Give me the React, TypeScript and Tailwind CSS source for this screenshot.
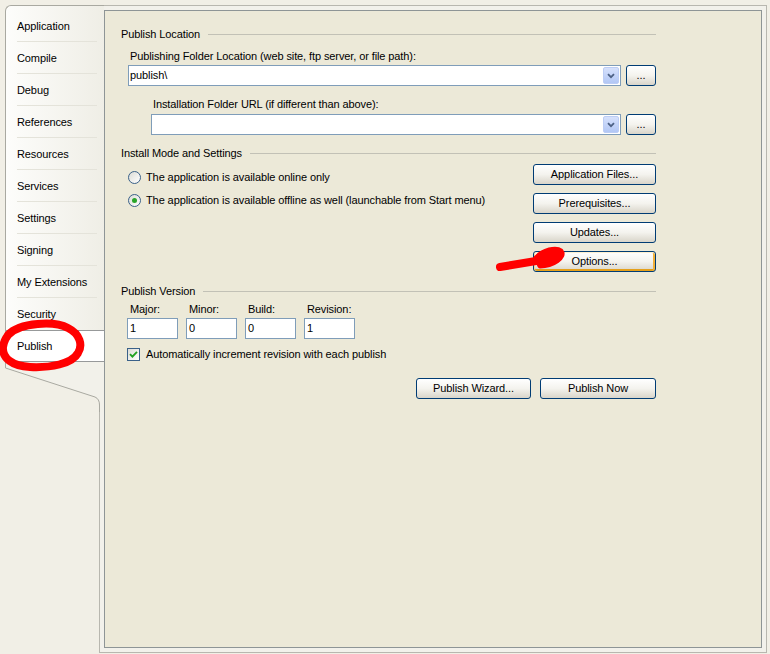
import React from 'react';

const tabs = [
    'Application',
    'Compile',
    'Debug',
    'References',
    'Resources',
    'Services',
    'Settings',
    'Signing',
    'My Extensions',
    'Security',
    'Publish',
];
const selectedTab = 'Publish';

const btn =
    'flex items-center justify-center h-[21px] rounded-[3px] border border-[#003c74] bg-linear-to-b from-[#ffffff] via-[#f4f3ee] to-[#d9d5ca] text-[11px] leading-[13px] text-black';

function Chevron() {
    return (
        <svg width="8" height="6" viewBox="0 0 8 6">
            <path d="M1 1.2 L4 4.2 L7 1.2" fill="none" stroke="#4d6185" strokeWidth="1.8" />
        </svg>
    );
}

function Combo({ value }: { value?: string }) {
    return (
        <div className="flex-1 h-[21px] border border-[#7f9db9] bg-white flex items-center pl-[1px] pr-px">
            <span className="flex-1 text-[11px] leading-[13px]">{value}</span>
            <div className="w-[16px] h-[17px] rounded-[2px] border border-[#bccdf5] bg-linear-to-b from-[#d6e1fc] to-[#b2c7f5] flex items-center justify-center">
                <Chevron />
            </div>
        </div>
    );
}

function GroupHeader({ title }: { title: string }) {
    return (
        <div className="flex items-center gap-[8px] h-[13px]">
            <span className="text-[11px] leading-[13px] whitespace-nowrap">{title}</span>
            <div className="flex-1 h-px bg-[#c2c1b6]" />
        </div>
    );
}

function Radio({ checked, label }: { checked?: boolean; label: string }) {
    return (
        <div className="flex items-center gap-[5px] h-[13px]">
            <div className="w-[13px] h-[13px] rounded-full border border-[#3a6189] bg-linear-to-br from-[#dcdcd6] to-[#ffffff] flex items-center justify-center">
                {checked && <div className="w-[5px] h-[5px] rounded-full bg-[#2aa52a]" />}
            </div>
            <span className="text-[11px] leading-[13px] whitespace-nowrap">{label}</span>
        </div>
    );
}

function VersionField({ label, value }: { label: string; value: string }) {
    return (
        <div className="flex flex-col w-[51px]">
            <span className="text-[11px] leading-[13px] pl-[3px]">{label}</span>
            <div className="mt-[2px] h-[21px] border border-[#7f9db9] bg-white flex items-center pl-[2px] text-[11px] leading-[13px]">
                {value}
            </div>
        </div>
    );
}

function TabColumn() {
    return (
        <div className="relative z-10 self-start w-[99px] -mr-[5px] flex flex-col">
            <div className="border-t border-l border-[#a9a9a1] rounded-tl-[6px] bg-linear-to-r from-[#fdfdfb] to-[#efeee6] pt-[4px]">
                {tabs.map((t, i) => {
                    const selected = t === selectedTab;
                    const nextSelected = tabs[i + 1] === selectedTab;
                    if (selected) {
                        return (
                            <div
                                key={t}
                                className="h-[32px] bg-white border-y border-[#97999a] flex items-center pl-[11px] pt-px text-[11px] leading-[13px]"
                            >
                                {t}
                            </div>
                        );
                    }
                    return (
                        <div key={t} className="h-[32px] flex flex-col">
                            <div className="flex-1 flex items-center pl-[11px] pt-[2px] text-[11px] leading-[13px]">{t}</div>
                            <div
                                className={
                                    nextSelected
                                        ? 'h-px ml-[11px] mr-[7px] bg-transparent'
                                        : 'h-px ml-[11px] mr-[7px] bg-[#e4e3da]'
                                }
                            />
                        </div>
                    );
                })}
            </div>
            <svg width="99" height="50" viewBox="0 0 99 50" className="block">
                <path d="M0 0 L99 0 L99 50 L94.5 50 L94.5 43 Q94.5 37 90 35 L0 6 Z" fill="#f2f1ea" />
                <path d="M0 6 L90 35 Q94.5 37 94.5 43 L94.5 50 L0 50 Z" fill="#f1efe6" />
                <path
                    d="M0.5 0 L0.5 6 L90 35 Q94.5 37 94.5 43 L94.5 50"
                    fill="none"
                    stroke="#a9a9a1"
                    strokeWidth="1"
                />
            </svg>
        </div>
    );
}

export default function App() {
    return (
        <div className="relative w-[770px] h-[654px] bg-[#f1efe6] pt-[5px] pl-[5px] pr-[3px] pb-px flex font-['Liberation_Sans',Arial,sans-serif] tracking-[-0.1px] text-black overflow-hidden">
            <TabColumn />
            <div className="flex-1 flex border border-[#b8b7af] bg-[#f2f1eb] p-[4px]">
                <div className="flex-1 border border-[#8e9596] bg-[#ece9d8]">
                    <div className="w-[551px] pl-[16px] pt-[17px] flex flex-col">
                        <GroupHeader title="Publish Location" />
                        <span className="mt-[9px] ml-[9px] text-[11px] leading-[13px]">
                            Publishing Folder Location (web site, ftp server, or file path):
                        </span>
                        <div className="mt-[2px] ml-[7px] flex gap-[5px]">
                            <Combo value="publish\" />
                            <div className={btn + ' w-[30px]'}>...</div>
                        </div>
                        <span className="mt-[12px] ml-[32px] text-[11px] leading-[13px]">
                            Installation Folder URL (if different than above):
                        </span>
                        <div className="mt-[3px] ml-[30px] flex gap-[5px]">
                            <Combo />
                            <div className={btn + ' w-[30px]'}>...</div>
                        </div>

                        <div className="mt-[12px]">
                            <GroupHeader title="Install Mode and Settings" />
                        </div>
                        <div className="mt-[4px] flex justify-between">
                            <div className="ml-[7px] pt-[7px] flex flex-col gap-[10px]">
                                <Radio label="The application is available online only" />
                                <Radio checked label="The application is available offline as well (launchable from Start menu)" />
                            </div>
                            <div className="flex flex-col gap-[8px] w-[123px]">
                                <div className={btn}>Application Files...</div>
                                <div className={btn}>Prerequisites...</div>
                                <div className={btn}>Updates...</div>
                                <div
                                    className={
                                        btn +
                                        ' shadow-[inset_0_1px_0_#fff0cf,inset_1px_0_0_#fbd98c,inset_-2px_0_0_#f1b03a,inset_0_-2px_0_#e5a01a]'
                                    }
                                >
                                    Options...
                                </div>
                            </div>
                        </div>

                        <div className="mt-[13px]">
                            <GroupHeader title="Publish Version" />
                        </div>
                        <div className="mt-[5px] ml-[6px] flex gap-[8px]">
                            <VersionField label="Major:" value="1" />
                            <VersionField label="Minor:" value="0" />
                            <VersionField label="Build:" value="0" />
                            <VersionField label="Revision:" value="1" />
                        </div>
                        <div className="mt-[9px] ml-[6px] flex items-center gap-[6px] h-[13px]">
                            <div className="w-[13px] h-[13px] border border-[#3a6189] bg-linear-to-br from-[#dcdcd6] to-[#ffffff] flex items-center justify-center">
                                <svg width="9" height="9" viewBox="0 0 9 9">
                                    <path d="M1 4.2 L3.4 6.6 L8 1.8" fill="none" stroke="#21a121" strokeWidth="1.9" />
                                </svg>
                            </div>
                            <span className="text-[11px] leading-[13px] whitespace-nowrap">
                                Automatically increment revision with each publish
                            </span>
                        </div>
                        <div className="mt-[17px] flex justify-end gap-[9px]">
                            <div className={btn + ' w-[115px]'}>Publish Wizard...</div>
                            <div className={btn + ' w-[116px]'}>Publish Now</div>
                        </div>
                    </div>
                </div>
            </div>

            {/* red marker scribbles drawn over the dialog */}
            <svg className="absolute inset-0 z-20 pointer-events-none" width="770" height="654" viewBox="0 0 770 654">
                <path
                    d="M8 335 C20 322 55 321 68 328 C80 334 83 345 78 353 C72 364 50 368 30 367 C12 366 2 358 3 347 C4 340 6 337 10 333"
                    fill="none"
                    stroke="#ff0000"
                    strokeWidth="8"
                    strokeLinecap="round"
                />
                <path d="M500 267 L536 261" fill="none" stroke="#ff0000" strokeWidth="8" strokeLinecap="round" />
                <path
                    d="M536 258 C543 250 556 247 561 251 C566 257 553 266 540 266 Z"
                    fill="#ff0000"
                    stroke="#ff0000"
                    strokeWidth="5"
                    strokeLinejoin="round"
                />
            </svg>
        </div>
    );
}
